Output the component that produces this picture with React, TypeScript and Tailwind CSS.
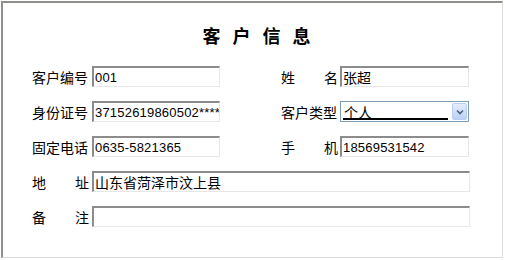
import React from "react";

const CJK = '"Noto Sans CJK SC", "Noto Sans", sans-serif';
const NUM = '"Liberation Sans", "Noto Sans CJK SC", sans-serif';

function Label({ text, spread = false }: { text: string; spread?: boolean }) {
  const chars = Array.from(text);
  return (
    <div
      className={`w-[58px] shrink-0 flex items-center whitespace-nowrap text-[14px] leading-none text-black ${spread ? "justify-between pr-[1px]" : "justify-start"}`}
      style={{ fontFamily: CJK }}
    >
      {spread ? chars.map((c, i) => <span key={i}>{c}</span>) : text}
    </div>
  );
}

function Field({ value, width, cjk = false }: { value: string; width: string; cjk?: boolean }) {
  return (
    <div
      className={`${width} h-[21px] shrink-0 border-t-2 border-l-2 border-b border-r border-t-[#8c8c8c] border-l-[#8c8c8c] border-b-[#e6e6e6] border-r-[#e6e6e6] bg-white overflow-hidden whitespace-nowrap flex items-center pl-[1px]`}
    >
      <span
        className={cjk ? "text-[14px] leading-none" : "text-[13px] leading-none tracking-[0.2px]"}
        style={{ fontFamily: cjk ? CJK : NUM }}
      >
        {value}
      </span>
    </div>
  );
}

function Select() {
  return (
    <div className="w-[129px] h-[21px] shrink-0 border border-[#7f9db9] bg-white flex items-stretch p-[1px]">
      <div className="flex-1 relative flex items-center pl-[2px]">
        <span className="text-[14px] leading-none" style={{ fontFamily: CJK }}>
          个人
        </span>
        <div className="absolute left-[1px] right-[4px] bottom-[0px] h-[2px] bg-black" />
      </div>
      <div className="w-[15px] rounded-[2px] border border-[#b9cdf5] bg-gradient-to-b from-[#e6eefc] to-[#bccff5] flex items-center justify-center">
        <svg width="8" height="6" viewBox="0 0 8 6">
          <path d="M1 1.5 L4 4.5 L7 1.5" fill="none" stroke="#4d6185" strokeWidth="1.6" />
        </svg>
      </div>
    </div>
  );
}

function Row({ children }: { children: React.ReactNode }) {
  return <div className="flex items-center h-[21px]">{children}</div>;
}

export default function App() {
  return (
    <div className="w-[505px] h-[260px] bg-white pt-[1px] pl-[1px] pr-[2px] pb-[2px]">
      <div className="w-full h-full border-t-2 border-l-2 border-t-[#8f8f8b] border-l-[#8f8f8b] border-b border-r border-b-[#dcdcd6] border-r-[#dcdcd6] flex flex-col">
        <div
          className="h-[63px] flex items-center justify-center pt-[2px] pl-[20px] text-[18px] font-bold tracking-[12px] text-black"
          style={{ fontFamily: CJK }}
        >
          客户信息
        </div>
        <div className="flex flex-col gap-[14px] pl-[29px]">
          <Row>
            <Label text="客户编号" />
            <div className="w-[2px]" />
            <Field value="001" width="w-[128px]" />
            <div className="w-[61px]" />
            <Label text="姓名" spread />
            <div className="w-[1px]" />
            <Field value="张超" width="w-[129px]" cjk />
          </Row>
          <Row>
            <Label text="身份证号" />
            <div className="w-[2px]" />
            <Field value="37152619860502****" width="w-[128px]" />
            <div className="w-[61px]" />
            <Label text="客户类型" />
            <div className="w-[1px]" />
            <Select />
          </Row>
          <Row>
            <Label text="固定电话" />
            <div className="w-[2px]" />
            <Field value="0635-5821365" width="w-[128px]" />
            <div className="w-[61px]" />
            <Label text="手机" spread />
            <div className="w-[1px]" />
            <Field value="18569531542" width="w-[129px]" />
          </Row>
          <Row>
            <Label text="地址" spread />
            <div className="w-[2px]" />
            <Field value="山东省菏泽市汶上县" width="w-[378px]" cjk />
          </Row>
          <Row>
            <Label text="备注" spread />
            <div className="w-[2px]" />
            <Field value="" width="w-[378px]" />
          </Row>
        </div>
      </div>
    </div>
  );
}
